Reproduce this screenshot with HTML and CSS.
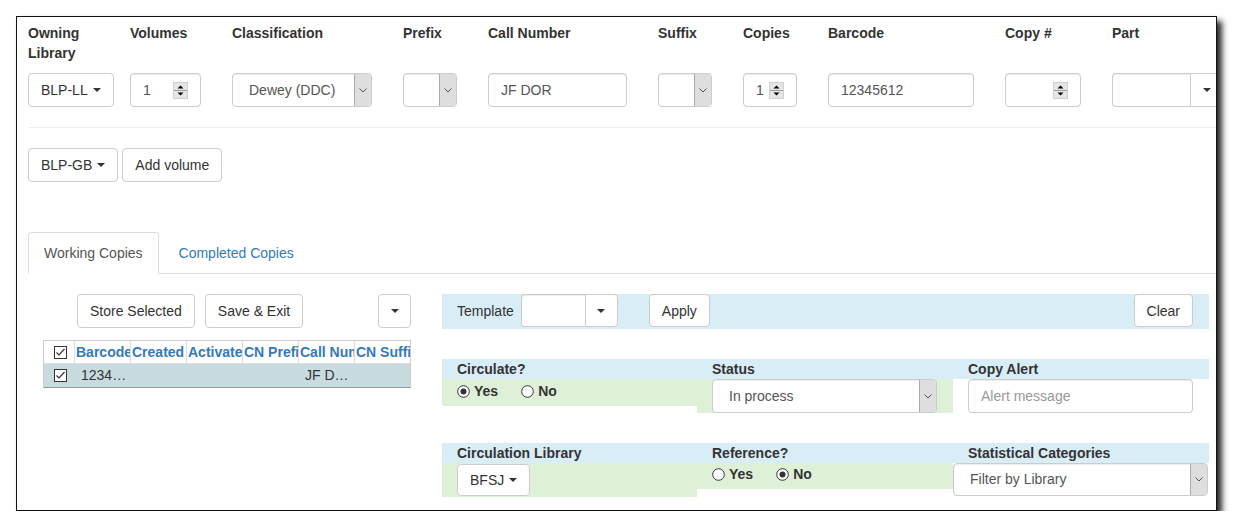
FILE: index.html
```html
<!DOCTYPE html>
<html>
<head>
<meta charset="utf-8">
<link rel="stylesheet" href="styles.css">
</head>
<body>
<div class="window">
  <div class="vol-form">
    <div class="field w-owning">
      <label>Owning Library</label>
      <button class="btn">BLP-LL <span class="caret"></span></button>
    </div>
    <div class="field w-vol">
      <label>Volumes</label>
      <div class="ctl num w-71"><span class="val">1</span><svg class="spin" width="15" height="17" viewBox="0 0 15 17"><rect x="0.5" y="0.5" width="14" height="16" fill="#e6e6e6" stroke="#d0d0d0"/><line x1="1" y1="8.5" x2="14" y2="8.5" stroke="#9c9c9c"/><polygon points="4.5,6.5 10.5,6.5 7.5,3.5" fill="#000"/><polygon points="4.5,10.5 10.5,10.5 7.5,13.5" fill="#000"/></svg></div>
    </div>
    <div class="field w-class">
      <label>Classification</label>
      <div class="ctl sel w-140"><span class="val">Dewey (DDC)</span><span class="arrow"><svg width="8" height="5" viewBox="0 0 8 5"><polyline points="0.5,0.5 4,4 7.5,0.5" fill="none" stroke="#555"/></svg></span></div>
    </div>
    <div class="field w-prefix">
      <label>Prefix</label>
      <div class="ctl sel w-54"><span class="val"></span><span class="arrow"><svg width="8" height="5" viewBox="0 0 8 5"><polyline points="0.5,0.5 4,4 7.5,0.5" fill="none" stroke="#555"/></svg></span></div>
    </div>
    <div class="field w-call">
      <label>Call Number</label>
      <input class="ctl text w-139" type="text" value="JF DOR">
    </div>
    <div class="field w-suffix">
      <label>Suffix</label>
      <div class="ctl sel w-54"><span class="val"></span><span class="arrow"><svg width="8" height="5" viewBox="0 0 8 5"><polyline points="0.5,0.5 4,4 7.5,0.5" fill="none" stroke="#555"/></svg></span></div>
    </div>
    <div class="field w-copies">
      <label>Copies</label>
      <div class="ctl num w-54"><span class="val">1</span><svg class="spin" width="15" height="17" viewBox="0 0 15 17"><rect x="0.5" y="0.5" width="14" height="16" fill="#e6e6e6" stroke="#d0d0d0"/><line x1="1" y1="8.5" x2="14" y2="8.5" stroke="#9c9c9c"/><polygon points="4.5,6.5 10.5,6.5 7.5,3.5" fill="#000"/><polygon points="4.5,10.5 10.5,10.5 7.5,13.5" fill="#000"/></svg></div>
    </div>
    <div class="field w-barcode">
      <label>Barcode</label>
      <input class="ctl text w-146" type="text" value="12345612">
    </div>
    <div class="field w-copyno">
      <label>Copy #</label>
      <div class="ctl num w-76"><span class="val"></span><svg class="spin" width="15" height="17" viewBox="0 0 15 17"><rect x="0.5" y="0.5" width="14" height="16" fill="#e6e6e6" stroke="#d0d0d0"/><line x1="1" y1="8.5" x2="14" y2="8.5" stroke="#9c9c9c"/><polygon points="4.5,6.5 10.5,6.5 7.5,3.5" fill="#000"/><polygon points="4.5,10.5 10.5,10.5 7.5,13.5" fill="#000"/></svg></div>
    </div>
    <div class="field w-part">
      <label>Part</label>
      <div class="combo part"><span class="combo-input w-78"></span><span class="combo-btn"><span class="caret"></span></span></div>
    </div>
  </div>

  <hr class="sep">

  <div class="vol-actions">
    <button class="btn">BLP-GB <span class="caret"></span></button>
    <button class="btn">Add volume</button>
  </div>

  <ul class="tabs">
    <li class="tab active"><a>Working Copies</a></li>
    <li class="tab"><a>Completed Copies</a></li>
  </ul>

  <div class="tab-body">
    <div class="left-pane">
      <div class="grid-toolbar">
        <button class="btn store">Store Selected</button>
        <button class="btn save">Save &amp; Exit</button>
        <button class="btn caret-btn"><span class="caret"></span></button>
      </div>
      <div class="grid">
        <div class="grid-head">
          <div class="cell chk"><svg width="13" height="13" viewBox="0 0 13 13"><rect x="0.5" y="0.5" width="12" height="12" fill="#fff" stroke="#333"/><polyline points="2.5,6.5 5,9 10.5,3" fill="none" stroke="#333" stroke-width="1.2"/></svg></div>
          <div class="cell">Barcode</div>
          <div class="cell">Created</div>
          <div class="cell">Activate</div>
          <div class="cell">CN Prefix</div>
          <div class="cell">Call Number</div>
          <div class="cell">CN Suffix</div>
        </div>
        <div class="grid-row">
          <div class="cell chk"><svg width="13" height="13" viewBox="0 0 13 13"><rect x="0.5" y="0.5" width="12" height="12" fill="#fff" stroke="#333"/><polyline points="2.5,6.5 5,9 10.5,3" fill="none" stroke="#333" stroke-width="1.2"/></svg></div>
          <div class="cell">12345612</div>
          <div class="cell"></div>
          <div class="cell"></div>
          <div class="cell"></div>
          <div class="cell">JF DOR</div>
          <div class="cell"></div>
        </div>
      </div>
    </div>

    <div class="right-pane">
      <div class="template-bar">
        <span class="tpl-label">Template</span>
        <div class="combo tpl"><span class="combo-input w-64"></span><span class="combo-btn"><span class="caret"></span></span></div>
        <button class="btn bar-btn apply">Apply</button>
        <button class="btn bar-btn clear">Clear</button>
      </div>

      <div class="attr-row">
        <div class="attr-col c1">
          <div class="attr-head">Circulate?</div>
          <div class="attr-body green radios r1">
            <label class="radio"><svg width="13" height="13" viewBox="0 0 13 13"><circle cx="6.5" cy="6.5" r="5.8" fill="#fff" stroke="#333"/><circle cx="6.5" cy="6.5" r="3" fill="#333"/></svg>Yes</label>
            <label class="radio"><svg width="13" height="13" viewBox="0 0 13 13"><circle cx="6.5" cy="6.5" r="5.8" fill="#fff" stroke="#333"/></svg>No</label>
          </div>
        </div>
        <div class="attr-col c2">
          <div class="attr-head">Status</div>
          <div class="attr-body green pad">
            <div class="ctl sel w-225"><span class="val">In process</span><span class="arrow"><svg width="8" height="5" viewBox="0 0 8 5"><polyline points="0.5,0.5 4,4 7.5,0.5" fill="none" stroke="#555"/></svg></span></div>
          </div>
        </div>
        <div class="attr-col c3">
          <div class="attr-head">Copy Alert</div>
          <div class="attr-body pad">
            <input class="ctl text w-225 alert" type="text" placeholder="Alert message">
          </div>
        </div>
      </div>

      <div class="attr-row">
        <div class="attr-col c1">
          <div class="attr-head">Circulation Library</div>
          <div class="attr-body green circ">
            <button class="btn small">BFSJ <span class="caret"></span></button>
          </div>
        </div>
        <div class="attr-col c2">
          <div class="attr-head">Reference?</div>
          <div class="attr-body green radios r2">
            <label class="radio"><svg width="13" height="13" viewBox="0 0 13 13"><circle cx="6.5" cy="6.5" r="5.8" fill="#fff" stroke="#333"/></svg>Yes</label>
            <label class="radio"><svg width="13" height="13" viewBox="0 0 13 13"><circle cx="6.5" cy="6.5" r="5.8" fill="#fff" stroke="#333"/><circle cx="6.5" cy="6.5" r="3" fill="#333"/></svg>No</label>
          </div>
        </div>
        <div class="attr-col c3">
          <div class="attr-head">Statistical Categories</div>
          <div class="attr-body">
            <div class="ctl sel w-255 stat"><span class="val">Filter by Library</span><span class="arrow"><svg width="8" height="5" viewBox="0 0 8 5"><polyline points="0.5,0.5 4,4 7.5,0.5" fill="none" stroke="#555"/></svg></span></div>
          </div>
        </div>
      </div>
    </div>
  </div>
</div>
</body>
</html>
```

FILE: styles.css
```css
* { box-sizing: border-box; }

body {
  margin: 0;
  background: #fff;
  font-family: "Liberation Sans", Arial, sans-serif;
  font-size: 14px;
  line-height: 20px;
  color: #333;
}

.window {
  margin: 16px 0 0 16px;
  width: 1201px;
  height: 495px;
  border: 1px solid #111;
  overflow: hidden;
  padding: 6px 0 0 11px;
  background: #fff;
  box-shadow: 5px 5px 6px rgba(0, 0, 0, 0.85);
}

/* ---------- volume form ---------- */
.vol-form { display: flex; white-space: nowrap; }
.field { flex: none; padding-right: 17px; }
.field label {
  display: block;
  height: 50px;
  font-weight: bold;
  white-space: normal;
}
.w-owning { width: 102px; }
.w-vol { width: 102px; }
.w-class { width: 171px; }
.w-prefix { width: 85px; }
.w-call { width: 170px; }
.w-suffix { width: 85px; }
.w-copies { width: 85px; }
.w-barcode { width: 177px; }
.w-copyno { width: 107px; }
.w-part { width: 200px; }

.w-54 { width: 54px; }
.w-64 { width: 64px; }
.w-71 { width: 71px; }
.w-76 { width: 76px; }
.w-78 { width: 78px; }
.w-139 { width: 139px; }
.w-140 { width: 140px; }
.w-146 { width: 146px; }
.w-225 { width: 225px; }
.w-255 { width: 255px; }

.btn {
  display: inline-flex;
  align-items: center;
  height: 34px;
  padding: 6px 12px;
  border: 1px solid #ccc;
  border-radius: 4px;
  background: #fff;
  color: #333;
  font-family: inherit;
  font-size: 14px;
  line-height: 20px;
  white-space: nowrap;
}
.caret {
  display: inline-block;
  width: 0;
  height: 0;
  margin-left: 5px;
  border-top: 4px solid #333;
  border-left: 4px solid transparent;
  border-right: 4px solid transparent;
}

.ctl {
  height: 34px;
  border: 1px solid #ccc;
  border-radius: 4px;
  background: #fff;
  color: #555;
  font-family: inherit;
  font-size: 14px;
  box-shadow: inset 0 1px 1px rgba(0, 0, 0, 0.075);
}
.text { display: block; padding: 6px 12px; outline: none; }
.alert::placeholder { color: #999; }

.num {
  display: flex;
  align-items: center;
  padding: 0 12px;
}
.num .val { flex: 1; }
.num .spin { flex: none; }

.sel {
  display: flex;
  align-items: stretch;
  overflow: hidden;
}
.sel .val {
  flex: 1;
  padding-left: 16px;
  line-height: 32px;
}
.sel .arrow {
  flex: none;
  width: 17px;
  display: flex;
  align-items: center;
  justify-content: center;
  background: #dedede;
  border-left: 1px solid #ababab;
}

.combo { display: flex; height: 34px; }
.combo-input {
  border: 1px solid #ccc;
  border-right: 0;
  border-radius: 4px 0 0 4px;
  background: #fff;
  box-shadow: inset 0 1px 1px rgba(0, 0, 0, 0.075);
}
.combo-btn {
  width: 33px;
  display: flex;
  align-items: center;
  justify-content: center;
  border: 1px solid #ccc;
  border-radius: 0 4px 4px 0;
  background: #fff;
}
.combo-btn .caret { margin-left: 0; }

.sep {
  margin: 20px 0;
  border: 0;
  border-top: 1px solid #eee;
  height: 0;
}

.vol-actions { display: flex; gap: 4px; }

/* ---------- tabs ---------- */
.tabs {
  display: flex;
  list-style: none;
  margin: 50px 0 0 0;
  padding: 0;
  border-bottom: 1px solid #ddd;
}
.tab { margin-bottom: -1px; margin-right: 4px; }
.tab a {
  display: block;
  padding: 10px 15px;
  border: 1px solid transparent;
  border-radius: 4px 4px 0 0;
  color: #337ab7;
  line-height: 20px;
}
.tab.active a {
  color: #555;
  background: #fff;
  border-color: #ddd #ddd transparent;
}

/* ---------- tab body ---------- */
.tab-body { display: flex; padding-top: 20px; }

.left-pane { width: 368px; margin-left: 15px; flex: none; }
.grid-toolbar { display: flex; }
.grid-toolbar .store { margin-left: 34px; }
.grid-toolbar .save { margin-left: 10px; }
.grid-toolbar .caret-btn {
  margin-left: auto;
  width: 33px;
  justify-content: center;
  padding: 0;
}
.grid-toolbar .caret-btn .caret { margin-left: 0; }

.grid {
  margin-top: 12px;
  width: 368px;
  border: 1px solid #ccc;
  border-bottom: 1px solid #999;
  overflow: hidden;
}
.grid-head, .grid-row { display: flex; }
.grid-head { height: 23px; border-bottom: 1px solid #ddd; background: #fff; }
.grid-row { height: 23px; background: #c8dcdf; }
.cell {
  flex: none;
  width: 56px;
  overflow: hidden;
  white-space: nowrap;
  line-height: 22px;
}
.cell.chk {
  width: 30px;
  display: flex;
  align-items: center;
  justify-content: center;
}
.grid-head .cell {
  border-right: 1px solid #ddd;
  padding-left: 1px;
  font-weight: bold;
  color: #337ab7;
  text-overflow: clip;
}
.grid-head .cell.chk { width: 31px; padding-left: 2px; }
.grid-row .cell {
  padding: 0 1px 0 6px;
  text-overflow: ellipsis;
}
.grid-row .cell.chk { width: 31px; padding: 0 0 0 2px; }

/* ---------- right pane ---------- */
.right-pane { width: 767px; margin-left: 31px; flex: none; }

.template-bar {
  display: flex;
  align-items: flex-start;
  height: 35px;
  background: #d9edf7;
  padding: 0 16px 0 15px;
}
.tpl-label { line-height: 34px; margin-right: 7px; }
.combo.tpl { height: 33px; }
.bar-btn { height: 33px; }
.apply { margin-left: 31px; }
.clear { margin-left: auto; }

.attr-row { display: flex; margin-top: 30px; }
.attr-col { flex: none; }
.attr-col.c1 { width: 255px; }
.attr-col.c2 { width: 256px; }
.attr-col.c3 { width: 256px; }
.attr-head {
  height: 20px;
  background: #d9edf7;
  padding-left: 15px;
  font-weight: bold;
  line-height: 20px;
  white-space: nowrap;
}
.attr-body.green { background: #dff0d8; }
.attr-body.pad { padding-left: 15px; }

.radios {
  display: flex;
  padding-left: 15px;
  font-weight: bold;
}
.radios.r1 { height: 27px; padding-top: 2px; }
.radios.r2 { height: 26px; padding-top: 1px; }
.radio { display: flex; align-items: center; height: 20px; }
.radio svg { margin-right: 4px; }
.radio + .radio { margin-left: 23px; }

.attr-body.circ { height: 34px; padding: 1px 0 0 15px; }
.btn.small { height: 32px; }

.stat { height: 33px; }
.stat .val { line-height: 31px; }
```
